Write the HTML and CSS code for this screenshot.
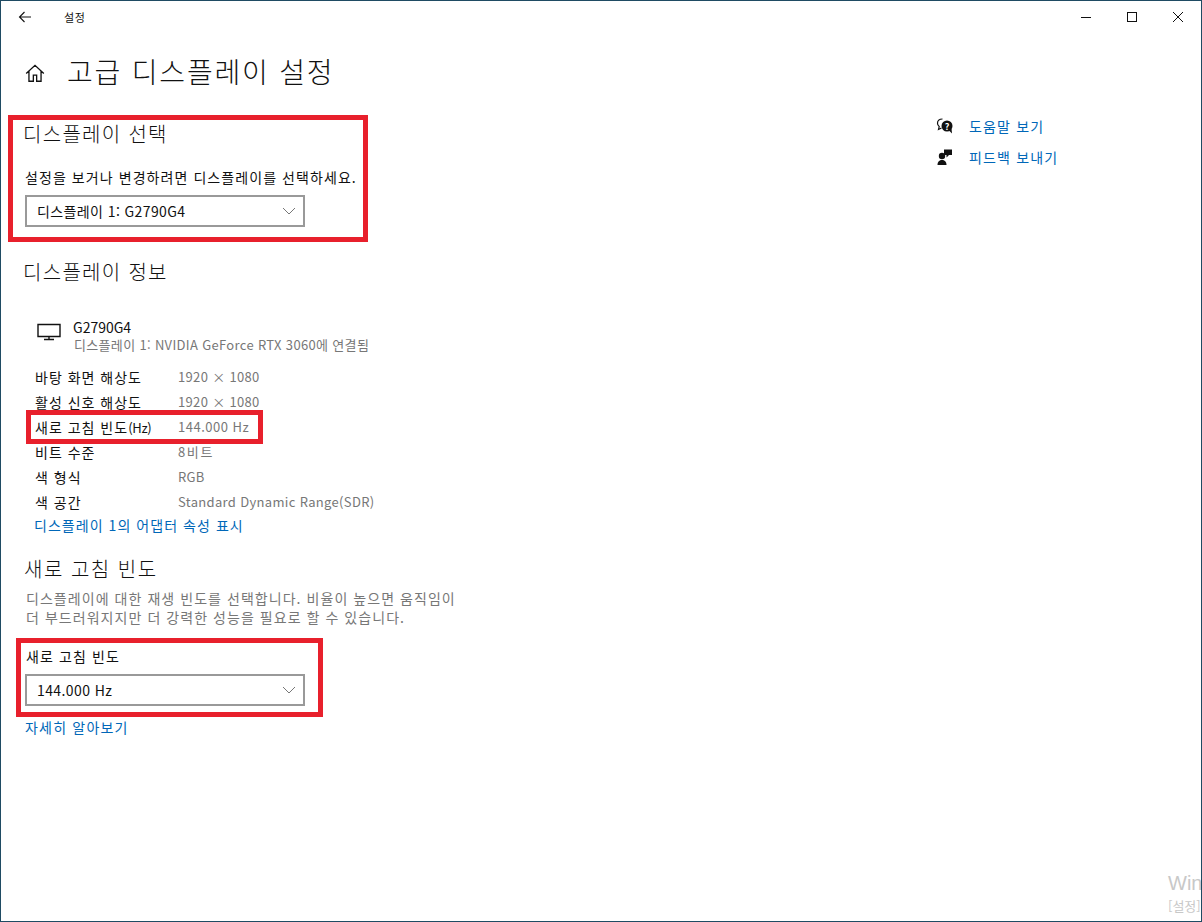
FILE: index.html
```html
<!DOCTYPE html>
<html lang="ko">

<head>

    <meta charset="UTF-8">
    <meta name="viewport" content="width=device-width, initial-scale=1.0">
    <title>설정</title>

    <link rel="stylesheet" href="styles.css">

</head>

<body>

    <div class="window">

        <div class="titlebar">
            <svg class="back-icon" width="16" height="16" viewBox="0 0 16 16">
                <path d="M14 8H2.500M7.500 3L2.500 8l5 5" fill="none" stroke="#111" stroke-width="1.1" />
            </svg>
            <span class="titlebar-name">설정</span>
            <div class="window-buttons">
                <svg width="46" height="32" viewBox="0 0 46 32">
                    <path d="M18 16.500h10" stroke="#111" stroke-width="1" />
                </svg>
                <svg width="46" height="32" viewBox="0 0 46 32">
                    <rect x="18.500" y="11.500" width="9" height="9" fill="none" stroke="#111" stroke-width="1" />
                </svg>
                <svg width="46" height="32" viewBox="0 0 46 32">
                    <path d="M18 11l10 10M28 11L18 21" stroke="#111" stroke-width="1" />
                </svg>
            </div>
        </div>

        <div class="page">

            <div class="main">

                <div class="page-head">
                    <svg class="home-icon" width="22" height="22" viewBox="0 0 20 20">
                        <path d="M2 10.500L10 3l8 7.500M4.500 8.500V17.500H8.500V12H11.500V17.500H15.500V8.500" fill="none" stroke="#111" stroke-width="1.200" />
                    </svg>
                    <h1>고급 디스플레이 설정</h1>
                </div>

                <section class="select-section">
                    <h2>디스플레이 선택</h2>
                    <p class="field-label">설정을 보거나 변경하려면 디스플레이를 선택하세요.</p>
                    <div class="dropdown">
                        <span>디스플레이 1: G2790G4</span>
                        <svg width="14" height="8" viewBox="0 0 14 8">
                            <path d="M1 1l6 6 6-6" fill="none" stroke="#777" stroke-width="1" />
                        </svg>
                    </div>
                </section>

                <section class="info-section">
                    <h2>디스플레이 정보</h2>
                    <div class="monitor">
                        <svg width="24" height="18" viewBox="0 0 24 18">
                            <path d="M1 1.500H23V13.500H1ZM12 13.500V16.500M7 16.500H17" fill="none" stroke="#111" stroke-width="1.400" />
                        </svg>
                        <div>
                            <div class="monitor-name">G2790G4</div>
                            <div class="monitor-desc">디스플레이 1: NVIDIA GeForce RTX 3060에 연결됨</div>
                        </div>
                    </div>
                    <div class="info-table">
                        <span>바탕 화면 해상도</span><span class="value">1920 × 1080</span>
                        <span>활성 신호 해상도</span><span class="value">1920 × 1080</span>
                        <span>새로 고침 빈도<span class="unit">(Hz)</span></span><span class="value value-hz">144.000 Hz</span>
                        <span>비트 수준</span><span class="value value-kr">8비트</span>
                        <span>색 형식</span><span class="value">RGB</span>
                        <span>색 공간</span><span class="value">Standard Dynamic Range(SDR)</span>
                    </div>
                    <a class="link adapter-link">디스플레이 1의 어댑터 속성 표시</a>
                </section>

                <section class="rate-section">
                    <h2>새로 고침 빈도</h2>
                    <p class="rate-desc">디스플레이에 대한 재생 빈도를 선택합니다. 비율이 높으면 움직임이<br>더 부드러워지지만 더 강력한 성능을 필요로 할 수 있습니다.</p>
                    <p class="field-label rate-label">새로 고침 빈도</p>
                    <div class="dropdown">
                        <span>144.000 Hz</span>
                        <svg width="14" height="8" viewBox="0 0 14 8">
                            <path d="M1 1l6 6 6-6" fill="none" stroke="#777" stroke-width="1" />
                        </svg>
                    </div>
                    <a class="link more-link">자세히 알아보기</a>
                </section>

            </div>

            <aside class="side">
                <div class="side-item">
                    <svg width="18" height="16" viewBox="0 0 18 16">
                        <path d="M6.500 1C3.500 1 1.500 2.800 1.500 5.300c0 1.500.7 2.600 1.700 3.300L2.500 11.500l3-1.500" fill="none" stroke="#111" stroke-width="1.200" />
                        <circle cx="11" cy="8" r="5.500" fill="#111" />
                        <path d="M13 12.500l3 3-.5-5Z" fill="#111" />
                        <text class="help-mark" x="11" y="11.500" text-anchor="middle">?</text>
                    </svg>
                    <a class="link">도움말 보기</a>
                </div>
                <div class="side-item">
                    <svg width="18" height="16" viewBox="0 0 18 16">
                        <circle cx="6" cy="7" r="3.200" fill="#111" />
                        <path d="M1.500 16c0-3.500 2-5 4.500-5s4.500 1.500 4.500 5Z" fill="#111" />
                        <path d="M8 .5h8V6h-3L10.500 8.500V6H8Z" fill="#111" />
                    </svg>
                    <a class="link">피드백 보내기</a>
                </div>
            </aside>

        </div>

        <!-- red marks drawn over the screenshot -->
        <i class="mark mark-select"></i>
        <i class="mark mark-hz"></i>
        <i class="mark mark-rate"></i>

        <div class="watermark">
            <div class="watermark-big">Windows</div>
            <div class="watermark-small">[설정]</div>
        </div>

    </div>

</body>

</html>
```

FILE: styles.css
```css
html,
body {
    width: 100%;
    height: 100%;
    margin: 0px;
    overflow: hidden;
}

body {
    background-color: #fff;
    color: #111;
    font-family: "Noto Sans CJK KR", "Liberation Sans", sans-serif;
}

.window {
    position: relative;
    box-sizing: border-box;
    width: 100%;
    height: 100%;
    overflow: hidden;
    border: 1px solid #1f4b63;
    background-color: #fff;
}

.titlebar {
    display: flex;
    align-items: center;
    height: 32px;
}

.back-icon {
    margin-left: 16px;
}

.titlebar-name {
    margin-left: 31px;
    font-size: 11px;
    letter-spacing: 0.7px;
}

.window-buttons {
    display: flex;
    margin-left: auto;
}

.page {
    display: flex;
}

.main {
    width: 935px;
}

.page-head {
    display: flex;
    align-items: center;
    height: 46px;
    padding-top: 15px;
    padding-left: 23px;
}

.home-icon {
    margin-top: 4px;
}

h1 {
    margin: 0px 0px 0px 21px;
    font-size: 28px;
    font-weight: 300;
    line-height: 46px;
    letter-spacing: 1.8px;
}

h2 {
    margin: 0px 0px 0px -1px;
    font-size: 20px;
    font-weight: 300;
    line-height: 28px;
    letter-spacing: 1.3px;
}

section {
    padding-left: 23px;
}

.select-section {
    padding-top: 26px;
}

.field-label {
    margin: 0px;
    font-size: 14px;
    line-height: 20px;
    letter-spacing: 1.07px;
}

.select-section .field-label {
    margin-top: 19px;
    margin-left: 1px;
}

.dropdown {
    display: flex;
    align-items: center;
    justify-content: space-between;
    box-sizing: border-box;
    width: 280px;
    height: 32px;
    margin-top: 8px;
    margin-left: 1px;
    padding: 0px 7px 0px 10px;
    border: 2px solid #999;
    font-size: 14px;
    letter-spacing: 0.4px;
}

.info-section {
    padding-top: 31px;
}

.monitor {
    display: flex;
    align-items: flex-start;
    gap: 12px;
    margin-top: 33px;
    margin-left: 13px;
}

.monitor svg {
    margin-top: 4px;
}

.monitor-name {
    font-size: 14px;
    line-height: 16px;
}

.monitor-desc {
    margin-left: 1px;
    font-size: 13px;
    line-height: 19px;
    color: #777;
    letter-spacing: 0.33px;
}

.info-table {
    display: grid;
    grid-template-columns: 143px 1fr;
    grid-auto-rows: 25px;
    align-items: center;
    margin-top: 10px;
    margin-left: 11px;
    font-size: 14px;
    letter-spacing: 1px;
}

.unit {
    font-size: 13px;
    letter-spacing: -0.3px;
}

.value {
    font-size: 13px;
    color: #777;
    letter-spacing: 0.33px;
}

.value-hz {
    letter-spacing: 0.5px;
}

.value-kr {
    letter-spacing: 1.6px;
}

.link {
    color: #0067b8;
    font-size: 14px;
    letter-spacing: 1.15px;
}

.adapter-link {
    display: block;
    margin-left: 10px;
    line-height: 23px;
    letter-spacing: 1.05px;
}

.rate-section {
    padding-top: 18px;
}

.rate-section h2 {
    margin-left: 0px;
    letter-spacing: 1.5px;
}

.rate-desc {
    margin: 6px 0px 0px 2px;
    font-size: 14px;
    line-height: 19px;
    color: #777;
    letter-spacing: 1.05px;
}

.rate-label {
    margin-top: 19px;
    margin-left: 2px;
    letter-spacing: 1.1px;
}

.more-link {
    display: block;
    margin-top: 11px;
    margin-left: 1px;
    line-height: 20px;
    letter-spacing: 1.2px;
}

.side {
    padding-top: 77px;
}

.side-item {
    display: flex;
    align-items: center;
    gap: 15px;
    height: 31px;
}

.help-mark {
    fill: #fff;
    font-size: 9px;
    font-weight: 700;
}

.mark {
    position: absolute;
    box-sizing: border-box;
    border: 5px solid #e8202c;
}

.mark-select {
    left: 7px;
    top: 114px;
    width: 360px;
    height: 127px;
}

.mark-hz {
    left: 25px;
    top: 409px;
    width: 237px;
    height: 34px;
}

.mark-rate {
    left: 15px;
    top: 637px;
    width: 307px;
    height: 79px;
}

.watermark {
    position: absolute;
    left: 1167px;
    top: 869px;
    white-space: nowrap;
    color: #c8c8c8;
}

.watermark-big {
    font-family: "Liberation Sans", sans-serif;
    font-size: 20px;
    line-height: 26px;
}

.watermark-small {
    font-size: 13px;
    line-height: 19px;
}
```
